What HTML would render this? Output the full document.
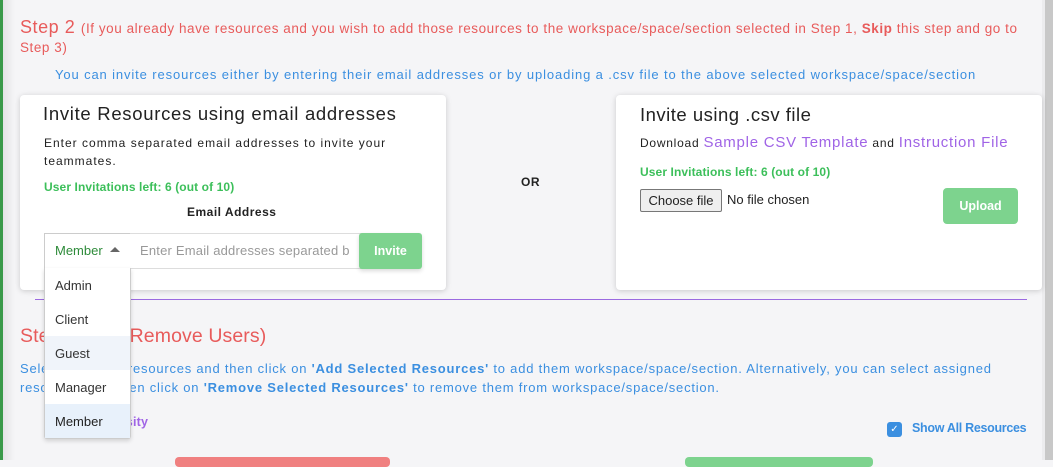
<!DOCTYPE html>
<html><head><style>
*{box-sizing:border-box;margin:0;padding:0}
body{width:1053px;height:460px;overflow:hidden;background:#f5f5f7;font-family:"Liberation Sans",sans-serif;position:relative}
.a{position:absolute;white-space:nowrap}
.card{position:absolute;background:#fff;border-radius:4px;box-shadow:0 1px 6px rgba(0,0,0,.18)}
.green{color:#3cbf5a;font-weight:bold;font-size:12px;letter-spacing:.1px}
</style></head><body>
<div class="a" style="left:0;top:0;width:3px;height:460px;background:#3a9a4a"></div>
<div class="a" style="left:3px;top:0;width:12px;height:460px;background:linear-gradient(90deg,#e4e4e6,#f5f5f7)"></div>
<div class="a" style="left:1045px;top:0;width:8px;height:460px;background:#c8c8c8"></div>
<div class="a" style="left:1042px;top:0;width:3px;height:460px;background:#ececee"></div>

<div class="a" style="left:20px;top:17px;color:#e85b5b;font-size:18px;letter-spacing:.55px">Step 2 <span style="font-size:13.5px">(If you already have resources and you wish to add those resources to the workspace/space/section selected in Step 1, <b>Skip</b> this step and go to</span></div>
<div class="a" style="left:20px;top:40px;color:#e85b5b;font-size:13.5px;letter-spacing:.55px">Step 3)</div>
<div class="a" style="left:55px;top:67px;color:#3b8fe0;font-size:13px;letter-spacing:.88px">You can invite resources either by entering their email addresses or by uploading a .csv file to the above selected workspace/space/section</div>

<div class="card" style="left:20px;top:95px;width:426px;height:195px"></div>
<div class="a" style="left:43px;top:103px;font-size:18.5px;color:#222;letter-spacing:.7px">Invite Resources using email addresses</div>
<div class="a" style="left:44px;top:134px;font-size:12px;color:#222;line-height:18px;letter-spacing:1px">Enter comma separated email addresses to invite your<br>teammates.</div>
<div class="a green" style="left:44px;top:180px">User Invitations left: 6 (out of 10)</div>
<div class="a" style="left:187px;top:205px;font-size:12px;color:#222;font-weight:bold;letter-spacing:.5px">Email Address</div>
<div class="a" style="left:44px;top:233px;width:87px;height:36px;border:1px solid #ccc;background:#fff"></div>
<div class="a" style="left:55px;top:243px;font-size:13px;color:#2e8b3a">Member</div>
<div class="a" style="left:110px;top:247px;width:0;height:0;border-left:5px solid transparent;border-right:5px solid transparent;border-bottom:5px solid #666"></div>
<div class="a" style="left:130px;top:233px;width:232px;height:36px;border:1px solid #ddd;border-left:none;background:#fff"></div>
<div class="a" style="left:140px;top:243px;font-size:13px;color:#999;width:210px;overflow:hidden;letter-spacing:.2px">Enter Email addresses separated b</div>
<div class="a" style="left:359px;top:233px;width:63px;height:36px;background:#7dd38e;border-radius:3px;box-shadow:0 2px 4px rgba(0,0,0,.15);color:#fff;font-weight:bold;font-size:12.5px;text-align:center;line-height:36px">Invite</div>

<div class="a" style="left:521px;top:175px;font-size:12px;color:#222;font-weight:bold;letter-spacing:.5px">OR</div>

<div class="card" style="left:616px;top:95px;width:426px;height:195px"></div>
<div class="a" style="left:640px;top:104px;font-size:18.5px;color:#222;letter-spacing:.5px">Invite using .csv file</div>
<div class="a" style="left:640px;top:134px;font-size:12px;color:#222;letter-spacing:.75px">Download <span style="color:#a064e6;font-size:15px">Sample CSV Template</span> and <span style="color:#a064e6;font-size:15px">Instruction File</span></div>
<div class="a green" style="left:640px;top:165px">User Invitations left: 6 (out of 10)</div>
<div class="a" style="left:640px;top:189px;width:82px;height:23px;border:1px solid #777;background:#efefef;border-radius:2px;font-size:13px;color:#222;text-align:center;line-height:21px">Choose file</div>
<div class="a" style="left:727px;top:192px;font-size:13px;color:#222">No file chosen</div>
<div class="a" style="left:943px;top:188px;width:75px;height:36px;background:#7dd38e;border-radius:4px;color:#fff;font-weight:bold;font-size:12.5px;text-align:center;line-height:36px">Upload</div>

<div class="a" style="left:35px;top:299px;width:992px;height:1px;background:#9b6ae0"></div>

<div class="a" style="left:20px;top:325px;color:#e85b5b;font-size:19.5px;letter-spacing:.1px">Step 3 (Add/Remove Users)</div>
<div class="a" style="left:20px;top:359px;color:#3b8fe0;font-size:13px;line-height:19px;letter-spacing:.78px">Select available resources and then click on <b>'Add Selected Resources'</b> to add them workspace/space/section. Alternatively, you can select assigned<br>resources and then click on <b>'Remove Selected Resources'</b> to remove them from workspace/space/section.</div>
<div class="a" style="left:44px;top:415px;color:#a064e6;font-size:12.5px;font-weight:bold;letter-spacing:.2px">Select University</div>
<div class="a" style="left:887px;top:422px;width:15px;height:15px;background:#3b8fe0;border-radius:3px;color:#fff;font-size:10px;text-align:center;line-height:15px">✓</div>
<div class="a" style="left:912px;top:421px;color:#3b8fe0;font-size:12.5px;font-weight:bold;letter-spacing:-.3px">Show All Resources</div>
<div class="a" style="left:175px;top:457px;width:215px;height:10px;background:#f08080;border-radius:4px"></div>
<div class="a" style="left:685px;top:457px;width:188px;height:10px;background:#7dd38e;border-radius:4px"></div>

<div class="a" style="left:44px;top:268px;width:87px;height:171px;background:#fff;border:1px solid #ccc;border-top:none;border-radius:0 0 3px 3px;box-shadow:0 2px 4px rgba(0,0,0,.15)"></div>
<div class="a" style="left:45px;top:336px;width:85px;height:34px;background:#f0f4fa"></div>
<div class="a" style="left:45px;top:404px;width:85px;height:34px;background:#e8f1fb"></div>
<div class="a" style="left:55px;top:278px;font-size:13px;color:#333">Admin</div>
<div class="a" style="left:55px;top:312px;font-size:13px;color:#333">Client</div>
<div class="a" style="left:55px;top:346px;font-size:13px;color:#333">Guest</div>
<div class="a" style="left:55px;top:380px;font-size:13px;color:#333">Manager</div>
<div class="a" style="left:55px;top:414px;font-size:13px;color:#222">Member</div>
</body></html>
